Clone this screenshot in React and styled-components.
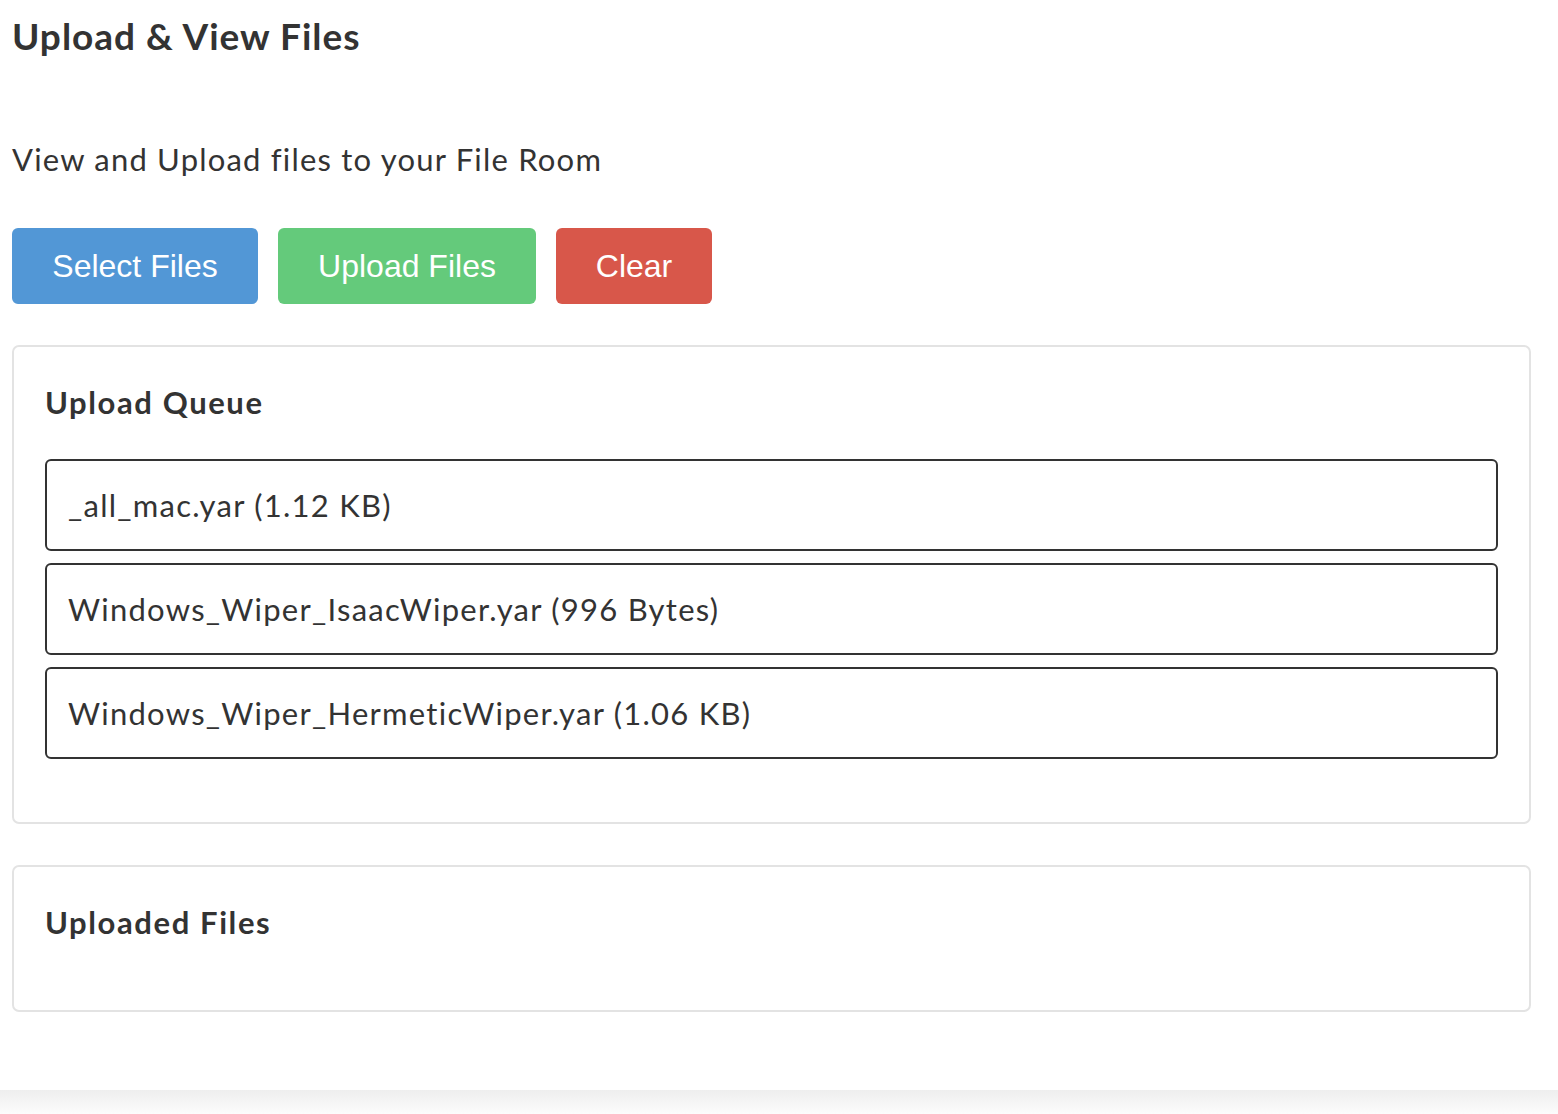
import React from 'react';
import styled, { createGlobalStyle } from 'styled-components';

const GlobalStyle = createGlobalStyle`
  body {
    margin: 0;
    background: #ffffff;
    font-family: Lato, "Noto Sans", sans-serif;
    color: #333333;
  }
`;

const queue = [
  { id: 1, name: '_all_mac.yar', size: '1.12 KB' },
  { id: 2, name: 'Windows_Wiper_IsaacWiper.yar', size: '996 Bytes' },
  { id: 3, name: 'Windows_Wiper_HermeticWiper.yar', size: '1.06 KB' },
];

function App() {
  return (
    <>
      <GlobalStyle />
      <PageWrapper>
        <Title>Upload &amp; View Files</Title>
        <Subtitle>View and Upload files to your File Room</Subtitle>
        <Toolbar>
          <ActionButton $bg='#5297d6' $w={246}>Select Files</ActionButton>
          <ActionButton $bg='#64ca7b' $w={258}>Upload Files</ActionButton>
          <ActionButton $bg='#d8574a' $w={156}>Clear</ActionButton>
        </Toolbar>
        <Card>
          <CardTitle>Upload Queue</CardTitle>
          <FileList>
            {queue.map(file => (
              <FileRow key={file.id}>{file.name} ({file.size})</FileRow>
            ))}
          </FileList>
        </Card>
        <Card>
          <CardTitle>Uploaded Files</CardTitle>
        </Card>
      </PageWrapper>
      <Footer />
    </>
  );
}

export default App;

const PageWrapper = styled.div`
  display: flex;
  flex-direction: column;
  padding: 14px 27px 0 12px;
  height: 1090px;
  box-sizing: border-box;
`;

const Title = styled.h1`
  margin: 0;
  font-size: 37px;
  line-height: 44px;
  font-weight: 700;
  letter-spacing: 1px;
  color: #333333;
`;

const Subtitle = styled.p`
  margin: 80px 0 0 0;
  font-size: 31px;
  line-height: 42px;
  font-weight: 400;
  letter-spacing: 1.2px;
  color: #333333;
`;

const Toolbar = styled.div`
  display: flex;
  gap: 20px;
  margin-top: 48px;
`;

const ActionButton = styled.button`
  width: ${props => props.$w}px;
  height: 76px;
  border: none;
  border-radius: 6px;
  background: ${props => props.$bg};
  color: #ffffff;
  font-family: "Liberation Sans", Arial, sans-serif;
  font-size: 32px;
  padding: 0;
  cursor: pointer;
`;

const Card = styled.section`
  margin-top: 41px;
  border: 2px solid #e3e3e3;
  border-radius: 7px;
  padding: 30px 31px 63px 31px;
`;

const CardTitle = styled.h2`
  margin: 0;
  font-size: 31px;
  line-height: 50px;
  font-weight: 700;
  letter-spacing: 1.6px;
  color: #333333;
`;

const FileList = styled.div`
  display: flex;
  flex-direction: column;
  gap: 12px;
  margin-top: 32px;
`;

const FileRow = styled.div`
  height: 92px;
  box-sizing: border-box;
  display: flex;
  align-items: center;
  padding: 0 21px;
  border: 2px solid #333333;
  border-radius: 6px;
  font-size: 31px;
  letter-spacing: 1.25px;
  color: #333333;
`;

const Footer = styled.footer`
  height: 24px;
  background: linear-gradient(#eeeeee, #fcfcfc);
`;
